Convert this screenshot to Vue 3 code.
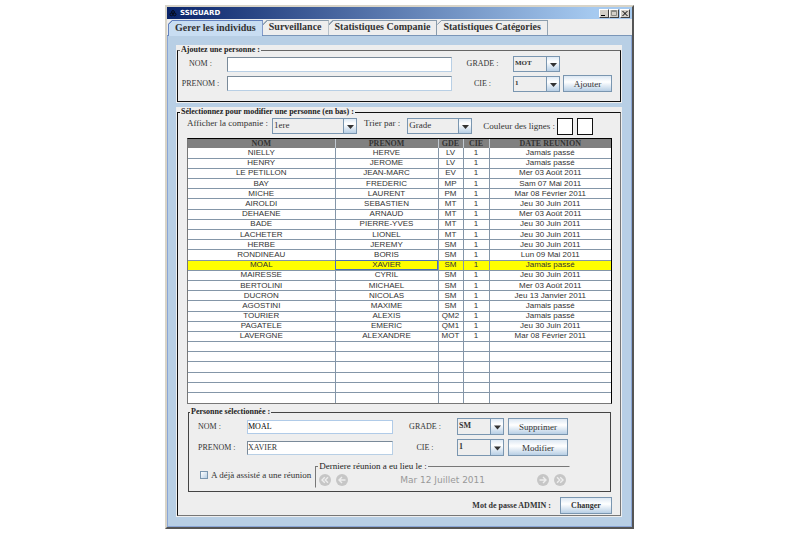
<script setup>
import { ref } from 'vue'

const tabs = ['Gerer les individus', 'Surveillance', 'Statistiques Companie', 'Statistiques Catégories']
const active = ref(0)

const people = [
  ['NIELLY', 'HERVE', 'LV', '1', 'Jamais passé'],
  ['HENRY', 'JEROME', 'LV', '1', 'Jamais passé'],
  ['LE PETILLON', 'JEAN-MARC', 'EV', '1', 'Mer 03 Août 2011'],
  ['BAY', 'FREDERIC', 'MP', '1', 'Sam 07 Mai 2011'],
  ['MICHE', 'LAURENT', 'PM', '1', 'Mar 08 Février 2011'],
  ['AIROLDI', 'SEBASTIEN', 'MT', '1', 'Jeu 30 Juin 2011'],
  ['DEHAENE', 'ARNAUD', 'MT', '1', 'Mer 03 Août 2011'],
  ['BADE', 'PIERRE-YVES', 'MT', '1', 'Jeu 30 Juin 2011'],
  ['LACHETER', 'LIONEL', 'MT', '1', 'Jeu 30 Juin 2011'],
  ['HERBE', 'JEREMY', 'SM', '1', 'Jeu 30 Juin 2011'],
  ['RONDINEAU', 'BORIS', 'SM', '1', 'Lun 09 Mai 2011'],
  ['MOAL', 'XAVIER', 'SM', '1', 'Jamais passé'],
  ['MAIRESSE', 'CYRIL', 'SM', '1', 'Jeu 30 Juin 2011'],
  ['BERTOLINI', 'MICHAEL', 'SM', '1', 'Mer 03 Août 2011'],
  ['DUCRON', 'NICOLAS', 'SM', '1', 'Jeu 13 Janvier 2011'],
  ['AGOSTINI', 'MAXIME', 'SM', '1', 'Jamais passé'],
  ['TOURIER', 'ALEXIS', 'QM2', '1', 'Jamais passé'],
  ['PAGATELE', 'EMERIC', 'QM1', '1', 'Jeu 30 Juin 2011'],
  ['LAVERGNE', 'ALEXANDRE', 'MOT', '1', 'Mar 08 Février 2011'],
]
const emptyRows = 6
const selected = ref(11)

const newLast = ref('')
const newFirst = ref('')
const lastName = ref('MOAL')
const firstName = ref('XAVIER')
</script>

<template>
  <div class="page">
    <main class="window">
      <header class="titlebar">
        <svg class="appicon" viewBox="0 0 8 8" aria-hidden="true">
          <circle cx="4" cy="3" r="1.4" />
          <circle cx="2.4" cy="5.4" r="1.4" />
          <circle cx="5.6" cy="5.4" r="1.4" />
        </svg>
        <h1>SSIGUARD</h1>
        <div class="controls">
          <button type="button" aria-label="Réduire">
            <svg viewBox="0 0 8 7"><path d="M1 5.5h4" stroke="#000" /></svg>
          </button>
          <button type="button" aria-label="Agrandir" disabled>
            <svg viewBox="0 0 8 7"><path d="M1.5 .5h5v5h-5zM1 1.5h6" stroke="#8a8a84" fill="none" /></svg>
          </button>
          <button type="button" class="close" aria-label="Fermer">
            <svg viewBox="0 0 8 7"><path d="M1.500 1l5 5M6.500 1l-5 5" stroke="#000" /></svg>
          </button>
        </div>
      </header>

      <nav class="tabs">
        <button
          v-for="(t, i) in tabs"
          :key="t"
          type="button"
          class="tab"
          :class="{ on: i === active }"
          @click="active = i"
        >{{ t }}</button>
      </nav>

      <div class="body">
        <section class="panel">
          <fieldset class="box add">
            <legend>Ajoutez une personne :</legend>
            <div class="addgrid">
              <label class="first" for="n1">NOM :</label>
              <input id="n1" v-model="newLast" type="text">
              <label for="g1">GRADE :</label>
              <span class="combo small"><select id="g1"><option>MOT</option></select>
                <svg viewBox="0 0 12 14"><path d="M3 6h7l-3.500 4z" /></svg></span>
              <span></span>
              <label class="first" for="p1">PRENOM :</label>
              <input id="p1" v-model="newFirst" type="text">
              <label for="c1">CIE :</label>
              <span class="combo small"><select id="c1"><option>1</option></select>
                <svg viewBox="0 0 12 14"><path d="M3 6h7l-3.500 4z" /></svg></span>
              <button type="button" class="btn">Ajouter</button>
            </div>
          </fieldset>
        </section>

        <section class="panel">
          <fieldset class="box list">
            <legend>Sélectionnez pour modifier une personne (en bas) :</legend>
            <div class="filters">
              <label for="f1">Afficher la companie :</label>
              <span class="combo plain wide"><select id="f1"><option>1ere</option></select>
                <svg viewBox="0 0 12 14"><path d="M3 6h7l-3.500 4z" /></svg></span>
              <label for="f2">Trier par :</label>
              <span class="combo plain mid"><select id="f2"><option>Grade</option></select>
                <svg viewBox="0 0 12 14"><path d="M3 6h7l-3.500 4z" /></svg></span>
              <span class="colours">Couleur des lignes :</span>
              <button type="button" class="swatch" aria-label="Couleur 1"></button>
              <button type="button" class="swatch" aria-label="Couleur 2"></button>
            </div>

            <div class="scroll">
              <table>
                <colgroup><col class="c1"><col class="c2"><col class="c3"><col class="c4"><col></colgroup>
                <thead>
                  <tr><th>NOM</th><th>PRENOM</th><th>GDE</th><th>CIE</th><th>DATE REUNION</th></tr>
                </thead>
                <tbody>
                  <tr v-for="(p, i) in people" :key="p[0]" :class="{ sel: i === selected }" @click="selected = i">
                    <td v-for="(c, j) in p" :key="j">{{ c }}</td>
                  </tr>
                  <tr v-for="n in emptyRows" :key="n"><td></td><td></td><td></td><td></td><td></td></tr>
                </tbody>
              </table>
            </div>

            <fieldset class="box person">
              <legend>Personne sélectionnée :</legend>
              <div class="persongrid">
                <label for="n2">NOM :</label>
                <input id="n2" v-model="lastName" type="text" class="focused">
                <label class="mid" for="g2">GRADE :</label>
                <span class="combo"><select id="g2"><option>SM</option></select>
                  <svg viewBox="0 0 12 14"><path d="M3 6h7l-3.500 4z" /></svg></span>
                <button type="button" class="btn">Supprimer</button>
                <label for="p2">PRENOM :</label>
                <input id="p2" v-model="firstName" type="text">
                <label class="mid" for="c2">CIE :</label>
                <span class="combo"><select id="c2"><option>1</option></select>
                  <svg viewBox="0 0 12 14"><path d="M3 6h7l-3.500 4z" /></svg></span>
                <button type="button" class="btn">Modifier</button>
              </div>
              <div class="meeting">
                <input id="seen" type="checkbox">
                <label for="seen">A déjà assisté a une réunion</label>
                <fieldset class="box last">
                  <legend>Derniere réunion a eu lieu le :</legend>
                  <div class="dates">
                    <button type="button" class="round" disabled aria-label="Début">
                      <svg viewBox="0 0 12 12"><circle cx="6" cy="6" r="6" /><path d="M5.800 3.200L3 6l2.800 2.800M9 3.200L6.200 6 9 8.800" /></svg>
                    </button>
                    <button type="button" class="round" disabled aria-label="Précédent">
                      <svg viewBox="0 0 12 12"><circle cx="6" cy="6" r="6" /><path d="M9.500 6H3M6 3L3 6l3 3" /></svg>
                    </button>
                    <span class="date">Mar 12 Juillet 2011</span>
                    <button type="button" class="round" disabled aria-label="Suivant">
                      <svg viewBox="0 0 12 12"><circle cx="6" cy="6" r="6" /><path d="M2.500 6H9M6 3l3 3-3 3" /></svg>
                    </button>
                    <button type="button" class="round" disabled aria-label="Fin">
                      <svg viewBox="0 0 12 12"><circle cx="6" cy="6" r="6" /><path d="M3 3.200L5.800 6 3 8.800M6.200 3.200L9 6 6.200 8.800" /></svg>
                    </button>
                  </div>
                </fieldset>
              </div>
            </fieldset>

            <div class="admin">
              <span>Mot de passe ADMIN :</span>
              <button type="button" class="btn">Changer</button>
            </div>
          </fieldset>
        </section>
      </div>
    </main>
  </div>
</template>

<style>
body { background: #fff; }
</style>

<style scoped>
* { box-sizing: border-box; }
.page {
  padding: 5px 166px 5px 165px;
  font: 8px/10px "Liberation Serif", serif;
  color: #333;
}
button, input, select { font: inherit; color: inherit; margin: 0; padding: 0; border-radius: 0; }
.window {
  border: 2px solid #d8d4c8;
  border-right-color: #555;
  border-bottom-color: #555;
  background: #eee;
}
.titlebar {
  display: flex;
  align-items: center;
  height: 12px;
  padding: 0 2px;
  background: linear-gradient(90deg, #0a246a, #a6caf0 92%);
}
.appicon { width: 8px; height: 8px; fill: none; stroke: #050a18; stroke-width: 1; }
h1 {
  margin: 0 auto 0 3px;
  font: bold 7px/10px "DejaVu Sans", sans-serif;
  color: #fff;
}
.controls { display: flex; }
.controls button {
  display: flex;
  width: 10px;
  height: 9px;
  border: 1px solid #fff;
  border-right-color: #404040;
  border-bottom-color: #404040;
  background: #d4d0c8;
}
.controls .close { margin-left: 1px; }
.controls svg { width: 8px; height: 7px; }

.tabs {
  display: flex;
  padding: 1px 1px 0;
  border-bottom: 1px solid #7a96b8;
}
.tab {
  height: 15px;
  padding: 0 6px 2px;
  border: 1px solid #8a9cac;
  border-width: 1px 1px 0 0;
  background: linear-gradient(135deg, #8a9cac 4px, #eee 4px) border-box;
  clip-path: polygon(4px 0, 100% 0, 100% 100%, 0 100%, 0 4px);
  font: bold 10px/12px "Liberation Serif", serif;
  white-space: nowrap;
}
.tab.on {
  height: 16px;
  margin-bottom: -1px;
  border-color: #6382bf;
  border-left-width: 1px;
  background: linear-gradient(135deg, #6382bf 4px, #c8ddf2 4px) border-box;
}

.body {
  display: flex;
  flex-direction: column;
  gap: 4px;
  padding: 9px 9px 9px 8px;
  border: 1px solid #8aa6d6;
  border-top: 0;
  background: #b8cfe5;
}
.panel { padding: 0 1px 1px; background: #eee; }
.box {
  min-width: 0;
  margin: 0;
  padding: 0;
  border: 1px solid #111;
}
legend {
  margin-left: 2px;
  padding: 0 1px;
  font-weight: bold;
  line-height: 10px;
  color: #222;
}
.add { border-top-color: #666; }
.addgrid {
  display: grid;
  grid-template-columns: 49px 1fr 61px 47px 49px;
  row-gap: 3px;
  align-items: center;
  padding: 1px 11px 9px 0;
}
.addgrid label { text-align: center; }
.addgrid .first { padding-right: 4px; }
.addgrid .btn { margin-left: 3px; margin-right: -3px; }
input[type="text"] {
  width: 100%;
  min-width: 0;
  height: 15px;
  border: 1px solid #7a8a99;
  border-right-color: #b8cfe5;
  border-bottom-color: #b8cfe5;
  background: #fff;
  outline: 0;
}
.combo {
  display: grid;
  grid-template-columns: 1fr 13px;
  height: 16px;
  border: 1px solid #7a96b0;
  font-weight: bold;
}
.combo select {
  grid-area: 1 / 1 / 2 / 3;
  width: 100%;
  padding: 0 14px 2px 1px;
  appearance: none;
  border: 0;
  background: transparent;
}
.combo svg {
  grid-area: 1 / 2;
  width: 100%;
  height: 100%;
  border-left: 1px solid #7a96b0;
  background: linear-gradient(#dfeaf5, #fff 35%, #b8cfe5);
  fill: #333;
  pointer-events: none;
}
.small { font-size: 7px; }
.plain { font-size: 9px; font-weight: normal; }
.btn {
  height: 17px;
  border: 1px solid #7a96b0;
  background: linear-gradient(#dde8f3, #fff 40%, #b8cfe5);
  font-size: 9px;
  line-height: 10px;
  white-space: nowrap;
}

.list { border-right-color: #777; border-bottom-color: #777; }
.filters {
  display: flex;
  align-items: flex-start;
  padding: 1px 0 3px 9px;
  font-size: 9px;
  white-space: nowrap;
}
.wide { width: 85px; margin: 0 7px 0 4px; }
.mid.combo { width: 65px; margin: 0 11px 0 7px; }
.colours { margin: 3px 2px 0 0; }
.swatch {
  width: 16px;
  height: 17px;
  margin-right: 4px;
  border: 1px solid #111;
  background: #fff;
}
.scroll {
  height: 266px;
  margin: 0 8px 0 9px;
  border: 1px solid #000;
  border-left-color: #777;
  border-bottom-color: #777;
  background: #fff;
}
table {
  width: 100%;
  height: 100%;
  table-layout: fixed;
  border-collapse: collapse;
  font: 8px/8px "Liberation Sans", sans-serif;
}
.c1 { width: 147px; }
.c2 { width: 103px; }
.c3 { width: 25px; }
.c4 { width: 26px; }
th {
  height: 9px;
  padding: 0;
  border-right: 1px solid #c0c8d0;
  background: #808080;
  font: bold 8px/8px "Liberation Serif", serif;
}
td {
  height: 10px;
  padding: 0;
  border-right: 1px solid #8496a8;
  border-bottom: 1px solid #8496a8;
  text-align: center;
  white-space: nowrap;
}
th:last-child, td:last-child { border-right: 0; }
tr:last-child td { border-bottom: 0; }
.sel td { background: #ff0; }
.sel td:nth-child(2) { outline: 1px solid #4a70b8; outline-offset: -1px; }

.person { margin: 3px 9px 0 10px; border-color: #444; }
.person > legend { margin-left: 1px; }
.persongrid {
  display: grid;
  grid-template-columns: 49px 1fr 64px 47px 64px;
  row-gap: 4px;
  align-items: center;
  padding: 1px 42px 0 9px;
}
.persongrid input { height: 14px; }
.persongrid .focused { border-color: #b0cbe8; color: #000; }
.persongrid .mid { text-align: center; }
.persongrid .combo { height: 17px; }
.persongrid .btn { margin-left: 4px; }
.meeting {
  display: flex;
  align-items: center;
  padding: 5px 40px 3px 11px;
  font-size: 9px;
  white-space: nowrap;
}
.meeting input {
  flex: none;
  width: 8px;
  height: 8px;
  margin: 0 3px 0 0;
  appearance: none;
  border: 1px solid #7a96b0;
  background: linear-gradient(135deg, #fff, #b8cfe5);
}
.last {
  flex: 1;
  margin-left: 4px;
  border-color: #777 transparent transparent #777;
}
.last legend { font-weight: normal; }
.dates {
  display: flex;
  align-items: center;
  gap: 5px;
  padding: 3px 3px 1px;
}
.round { flex: none; display: flex; border: 0; background: none; }
.round svg { width: 12px; height: 12px; fill: #c6c6c6; }
.round path { fill: none; stroke: #eee; stroke-width: 1.4; }
.date {
  flex: 1;
  text-align: center;
  font: 9px/12px "DejaVu Sans", sans-serif;
  color: #999;
}
.admin {
  display: flex;
  justify-content: flex-end;
  align-items: center;
  gap: 9px;
  padding: 5px 8px 1px;
  font-weight: bold;
}
.admin .btn { width: 52px; font-size: 8px; }
</style>
